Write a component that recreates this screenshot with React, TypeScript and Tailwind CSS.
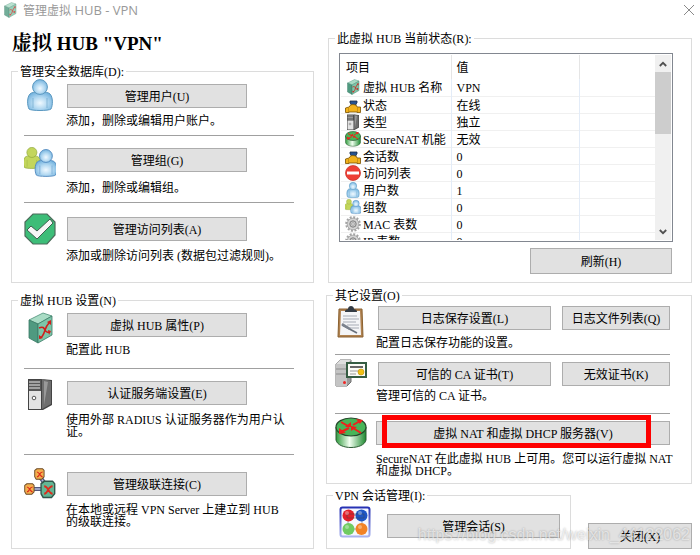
import type { ReactNode } from 'react';

type IconProps = { className?: string };

function HubIcon({ className = 'size-8' }: IconProps) {
  return (
    <svg viewBox="0 0 32 32" className={className} aria-hidden="true">
      <path d="M5 8 19 1l9 3-14 8z" fill="#a9dcc5" stroke="#4b8f78" strokeWidth=".8" />
      <path d="M5 8l9 4v19l-9-5z" fill="#4f9a80" stroke="#3b7a65" strokeWidth=".8" />
      <path d="M14 12l14-8v19l-14 8z" fill="#7cc6a9" stroke="#3b7a65" strokeWidth=".8" />
      <path d="M15 16c4-2 5 0 6 2s3 3 5 2M16 26c3-1 4-5 5-8s2-5 4-7" fill="none" stroke="#cf1f1c" strokeWidth="1.6" />
      <path d="M23 10l4-2v5zM24 18l3 1-2 4zM15 23v4l4-1z" fill="#cf1f1c" />
    </svg>
  );
}

function UserShape({ body, edge }: { body: string; edge: string }) {
  return (
    <g fill={body} stroke={edge} strokeWidth="1">
      <path d="M5 30c-2-4-2-12 1-15 2-3 18-3 20 0 3 3 3 11 1 15-2 2-20 2-22 0z" />
      <path d="M9 19v10M23 19v10" fill="none" opacity=".5" />
      <circle cx="16" cy="8" r="7.4" />
    </g>
  );
}

function BlueGradient({ id }: { id: string }) {
  return (
    <radialGradient id={id} cx=".5" cy=".6" r=".6">
      <stop offset="0" stopColor="#f0f9ff" />
      <stop offset=".5" stopColor="#b5daf2" />
      <stop offset="1" stopColor="#74b3de" />
    </radialGradient>
  );
}

function UserIcon({ className = 'size-8' }: IconProps) {
  return (
    <svg viewBox="0 0 32 32" className={className} aria-hidden="true">
      <defs><BlueGradient id="user-blue" /></defs>
      <UserShape body="url(#user-blue)" edge="#5a98c0" />
    </svg>
  );
}

function GroupIcon({ className = 'size-8' }: IconProps) {
  return (
    <svg viewBox="0 0 32 32" className={className} aria-hidden="true">
      <defs><BlueGradient id="group-blue" /></defs>
      <g transform="translate(-3 0) scale(.68)"><UserShape body="#c3d65c" edge="#8ea63a" /></g>
      <g transform="translate(8 2) scale(.87)"><UserShape body="url(#group-blue)" edge="#4c86bd" /></g>
    </svg>
  );
}

function AccessIcon({ className = 'size-8' }: IconProps) {
  return (
    <svg viewBox="0 0 32 32" className={className} aria-hidden="true">
      <path d="M9 1h14l8 8v13l-8 9H9l-8-8V9z" fill="#3dbd78" stroke="#4d6b5b" strokeWidth="1.2" />
      <path d="M3 17l4-4 6 5L26 6l3 4-16 16z" fill="#f6f6f6" stroke="#3f5f50" strokeWidth="1" />
    </svg>
  );
}

function ServerIcon({ className = 'size-8' }: IconProps) {
  return (
    <svg viewBox="0 0 32 32" className={className} aria-hidden="true">
      <path d="M4 1h13l11 1v25l-9 5H4z" fill="#444" />
      <path d="M18 1l9 2v23l-9 5z" fill="#6e6e6e" />
      <path d="M20 3l4 1-4 23z" fill="#999" />
      <path d="M5 2h12v11H5z" fill="#575757" />
      <path d="M5 4h11M5 7h11M5 10h11" stroke="#bbb" strokeWidth="1.3" />
      <path d="M5 13h12v18H5z" fill="#e3e3e3" />
      <circle cx="10" cy="20" r="1.8" fill="#fff" stroke="#555" />
    </svg>
  );
}

function SmallHub({ fill, edge }: { fill: string; edge: string }) {
  return (
    <g strokeLinejoin="round">
      <path d="M1 3l3-2h8l2 2v8l-3 3H3l-2-3z" fill={fill} stroke={edge} strokeWidth="1.3" />
      <path d="M4 11c4 0 3-6 8-6M4 5c4 0 4 6 8 6" fill="none" stroke="#dd2a1c" strokeWidth="1.5" />
    </g>
  );
}

function CascadeIcon({ className = 'size-8' }: IconProps) {
  return (
    <svg viewBox="0 0 32 32" className={className} aria-hidden="true">
      <path d="M16 10l6 8M9 22h9" stroke="#53587c" strokeWidth="4" />
      <path d="M16 10l6 8M9 22h9" stroke="#b5bada" strokeWidth="1.5" />
      <g transform="translate(10 1) scale(.72 .8)"><SmallHub fill="#f3b04e" edge="#6b4a25" /></g>
      <g transform="translate(0 16) scale(.72 .8)"><SmallHub fill="#f3b04e" edge="#6b4a25" /></g>
      <g transform="translate(16 13) scale(1.05 1.25)"><SmallHub fill="#63b695" edge="#31564b" /></g>
    </svg>
  );
}

function PlugIcon({ className = 'size-4' }: IconProps) {
  return (
    <svg viewBox="0 0 16 16" className={className} aria-hidden="true">
      <path d="M5 4h7v2l-1 1v3H6V7L5 6z" fill="#27538f" stroke="#1b2c48" strokeWidth=".8" />
      <path d="M5 9c0-2 7-2 7 1h3.500v5.500H12V15H4v.5H.5V11L4 10z" fill="#f2b21c" stroke="#7a5200" strokeWidth=".8" />
      <path d="M3.500 11v4M12.500 11v4" stroke="#c08a10" strokeWidth=".8" />
    </svg>
  );
}

function RouterIcon({ className = 'size-8' }: IconProps) {
  return (
    <svg viewBox="0 0 32 32" className={className} aria-hidden="true">
      <defs>
        <linearGradient id="router-side">
          <stop offset="0" stopColor="#2f9a3c" />
          <stop offset=".45" stopColor="#f1fff0" />
          <stop offset="1" stopColor="#1e8a30" />
        </linearGradient>
      </defs>
      <path d="M1 10v13c2 10 28 10 30 0V10z" fill="url(#router-side)" stroke="#2b5c33" />
      <ellipse cx="16" cy="10" rx="15" ry="9" fill="#48b558" stroke="#25492b" strokeWidth="1.2" />
      <path d="M6 5l7 4M25 4l-7 4M6 15l8-4M26 16l-8-5" stroke="#f0201c" strokeWidth="2" />
      <path d="M10 10h6V5zM21 2l7 1-3 4zM4 11v6l7-1zM16 9v5l6-4z" fill="#f0201c" />
    </svg>
  );
}

function DenyIcon({ className = 'size-4' }: IconProps) {
  return (
    <svg viewBox="0 0 16 16" className={className} aria-hidden="true">
      <circle cx="8" cy="8" r="7.500" fill="#ee3f35" stroke="#c42c25" strokeWidth=".7" />
      <path d="M2 6.500h12v3H2z" fill="#fff" />
    </svg>
  );
}

function GearIcon({ className = 'size-4' }: IconProps) {
  return (
    <svg viewBox="0 0 16 16" className={className} aria-hidden="true">
      <circle cx="8" cy="8" r="6.800" fill="none" stroke="#a3a3a3" strokeWidth="2" strokeDasharray="2 1.560" />
      <circle cx="8" cy="8" r="5.800" fill="#d3d3d3" stroke="#a0a0a0" strokeWidth=".8" />
      <circle cx="8" cy="8" r="3.200" fill="#c8c8c8" stroke="#808080" />
      <circle cx="8" cy="8" r="1.300" fill="#efefef" stroke="#888" strokeWidth=".6" />
    </svg>
  );
}

function LogIcon({ className = 'size-8' }: IconProps) {
  return (
    <svg viewBox="0 0 32 32" className={className} aria-hidden="true">
      <path d="M4 3h23l1 28H3z" fill="#b08250" stroke="#8a6130" />
      <path d="M6 5h19l1 24H5z" fill="#f4f5f7" />
      <path d="M10 6c0-3 2-2 3-3 0-4 6-4 6 0 1 1 3 0 3 3z" fill="#333b44" />
      <path d="M8 10h14M8 13h16M8 16h13M12 19h12M15 22h9" stroke="#c0c4cb" strokeWidth="1.4" />
      <path d="M7 19l15 8" stroke="#69707b" strokeWidth="1.600" />
      <path d="M7 18l8 5" stroke="#7c838e" strokeWidth="2.500" />
    </svg>
  );
}

function CertIcon({ className = 'size-8' }: IconProps) {
  return (
    <svg viewBox="0 0 32 32" className={className} aria-hidden="true">
      <path d="M1 5l4-4h11v22l-4 4H1z" fill="#9c9c9c" stroke="#707070" />
      <path d="M1 5h11v22H1z" fill="#c4c4c4" />
      <path d="M1 5l4-4h11l-4 4z" fill="#dedede" />
      <path d="M1 10h11M1 15h11" stroke="#8c8c8c" />
      <circle cx="9.500" cy="23.500" r="1.500" fill="#ee2727" />
      <path d="M12 4h19v14H12z" fill="#fbfbf6" stroke="#355c42" strokeWidth="2" />
      <path d="M15 8h13" stroke="#666" strokeWidth="2" />
      <path d="M15 12h8M15 15h6" stroke="#9a9a9a" />
      <circle cx="26" cy="13" r="3" fill="#f0c013" stroke="#bd8f00" strokeWidth=".6" />
    </svg>
  );
}

function SessionIcon({ className = 'size-8' }: IconProps) {
  return (
    <svg viewBox="0 0 32 32" className={className} aria-hidden="true">
      <defs>
        <linearGradient id="session-edge" x2="0" y2="1">
          <stop offset="0" stopColor="#2732b4" />
          <stop offset="1" stopColor="#a9b3ee" />
        </linearGradient>
      </defs>
      <rect x="1.500" y="1.500" width="29" height="29" rx="2" fill="#f5f7ff" stroke="url(#session-edge)" strokeWidth="2" />
      <path d="M9 9h14v14H9z" fill="none" stroke="#c9cdd8" strokeWidth="2" />
      <circle cx="9.500" cy="9.500" r="6" fill="#e3202b" />
      <circle cx="22.500" cy="9.500" r="6" fill="#1d55c4" />
      <circle cx="9.500" cy="23" r="6" fill="#6fcb62" />
      <circle cx="22.500" cy="23" r="6" fill="#f28326" />
      <path d="M8 8h17v4H8z" fill="none" stroke="#444" opacity=".45" />
      <g fill="#fff" opacity=".35">
        <circle cx="8" cy="7" r="2" />
        <circle cx="21" cy="7" r="2" />
        <circle cx="8" cy="21" r="2" />
        <circle cx="21" cy="21" r="2" />
      </g>
    </svg>
  );
}

// Latin runs get their own face, and never add to the height of a line
function Mixed({ text, latin = "font-['Liberation_Serif',serif]" }: { text: string; latin?: string }) {
  return text.split(/([\x20-\x7e]+)/).map((part, i) =>
    i % 2 ? (
      <span key={i} className={`leading-0 whitespace-pre-wrap ${latin}`}>{part}</span>
    ) : (
      part
    ),
  );
}

function Button({ label, className = '' }: { label: string; className?: string }) {
  return (
    <button type="button" className={`border border-[#adadad] bg-[#e1e1e1] text-center leading-4 hover:bg-[#e5f1fb] ${className}`}>
      <Mixed text={label} />
    </button>
  );
}

function Group({ title, className = '', bodyClass = '', children }: { title: string; className?: string; bodyClass?: string; children: ReactNode }) {
  return (
    <fieldset className={`min-w-0 border border-[#dcdcdc] ${className}`}>
      <legend className="ml-1.5 px-0.5 leading-4"><Mixed text={title} /></legend>
      <div className={bodyClass}>{children}</div>
    </fieldset>
  );
}

type ItemProps = {
  icon: ReactNode;
  label: string;
  note: string;
  className?: string;
  bodyClass?: string;
  noteClass?: string;
};

function Item({ icon, label, note, className = '', bodyClass = '', noteClass = 'mt-1.5' }: ItemProps) {
  return (
    <div className={`flex items-start gap-2.5 ${className}`}>
      {icon}
      <div className={`min-w-0 flex-1 ${bodyClass}`}>
        <Button label={label} className="ml-px block h-6 w-45" />
        <p className={`pr-1 ${noteClass}`}><Mixed text={note} /></p>
      </div>
    </div>
  );
}

const Line = ({ className = '' }: { className?: string }) => <hr className={`border-[#a0a0a0] ${className}`} />;

const rows = [
  { icon: <HubIcon className="size-4" />, name: '虚拟 HUB 名称', value: 'VPN' },
  { icon: <PlugIcon />, name: '状态', value: '在线' },
  { icon: <ServerIcon className="size-4" />, name: '类型', value: '独立' },
  { icon: <RouterIcon className="size-4" />, name: 'SecureNAT 机能', value: '无效' },
  { icon: <PlugIcon />, name: '会话数', value: '0' },
  { icon: <DenyIcon />, name: '访问列表', value: '0' },
  { icon: <UserIcon className="size-4" />, name: '用户数', value: '1' },
  { icon: <GroupIcon className="size-4" />, name: '组数', value: '0' },
  { icon: <GearIcon />, name: 'MAC 表数', value: '0' },
  { icon: <GearIcon />, name: 'IP 表数', value: '0' },
];

function StatusList() {
  return (
    <div className="mt-[7px] mr-[18px] ml-2.5 flex h-[189px] overflow-hidden border border-[#828790] p-px">
      <div className="min-w-0 flex-1 overflow-hidden">
        <table className="w-full table-fixed border-collapse text-left">
          <thead>
            <tr className="h-6">
              <th className="w-[110px] border-r border-[#e5e5e5] pl-[5px] font-normal">项目</th>
              <th className="w-32 border-r border-[#e5e5e5] pl-[5px] font-normal">值</th>
              <th />
            </tr>
          </thead>
          <tbody>
            {rows.map((row) => (
              <tr key={row.name} className="h-[17px] border-b border-[#f0f0f0]">
                <td className="border-r border-r-[#e3ecf8] p-0 pl-1">
                  <div className="flex h-4 items-center gap-0.5 whitespace-nowrap">
                    <span className="shrink-0">{row.icon}</span>
                    <span><Mixed text={row.name} /></span>
                  </div>
                </td>
                <td className="border-r border-r-[#e3ecf8] p-0 pl-[5px]"><Mixed text={row.value} /></td>
                <td className="p-0" />
              </tr>
            ))}
          </tbody>
        </table>
      </div>
      <div className="flex w-4 flex-col items-center bg-[#f0f0f0]">
        <button type="button" aria-label="向上滚动" className="flex h-[17px] w-full items-center justify-center">
          <svg viewBox="0 0 8 6" className="h-1.5 w-2"><path d="M.8 5L4 1.800 7.200 5" fill="none" stroke="#505050" strokeWidth="1.800" /></svg>
        </button>
        <div className="h-[62px] w-full bg-[#cdcdcd]" />
        <button type="button" aria-label="向下滚动" className="mt-auto flex h-[17px] w-full items-center justify-center">
          <svg viewBox="0 0 8 6" className="h-1.5 w-2"><path d="M.8 1L4 4.200 7.200 1" fill="none" stroke="#505050" strokeWidth="1.800" /></svg>
        </button>
      </div>
    </div>
  );
}

export default function App() {
  return (
    <div className="relative overflow-hidden bg-white pb-1.5 font-['Noto_Sans_CJK_SC',sans-serif] text-[12px] leading-3 text-black">
      <header className="flex h-5 items-center pr-1.5 pl-0.5">
        <HubIcon className="size-4 opacity-80" />
        <span className="ml-[5px] flex-1 leading-4 text-[#999]">
          <Mixed text="管理虚拟 HUB - VPN" latin="font-['Open_Sans',sans-serif] text-[13px]" />
        </span>
        <button type="button" aria-label="关闭窗口">
          <svg viewBox="0 0 10 10" className="size-2.5"><path d="M0 0l10 10M10 0L0 10" stroke="#8a8a8a" /></svg>
        </button>
      </header>

      <main className="grid grid-cols-[303fr_366fr] gap-x-3 pt-2.5 pr-2 pl-[11px]">
        <div>
          <h1 className="pl-px font-['Noto_Serif_CJK_SC','Noto_Sans_CJK_SC',sans-serif] text-[20px] leading-6 font-bold">
            <Mixed text={'虚拟 HUB "VPN"'} latin="font-['Liberation_Serif',serif] text-[19px]" />
          </h1>

          <Group title="管理安全数据库(D):" className="mt-[9px]" bodyClass="pr-[19px] pb-[21px] pl-3">
            <Item icon={<UserIcon />} label="管理用户(U)" note="添加，删除或编辑用户账户。" bodyClass="pt-[5px]" />
            <Line className="mt-[9px]" />
            <Item icon={<GroupIcon />} label="管理组(G)" note="添加，删除或编辑组。" className="mt-[11px]" bodyClass="pt-px" noteClass="mt-[9px]" />
            <Line className="mt-[9px]" />
            <Item icon={<AccessIcon />} label="管理访问列表(A)" note="添加或删除访问列表 (数据包过滤规则)。" className="mt-2.5" bodyClass="pt-1" noteClass="mt-2" />
          </Group>

          <Group title="虚拟 HUB 设置(N)" className="mt-[9px]" bodyClass="pr-[19px] pb-[21px] pl-3">
            <Item icon={<HubIcon />} label="虚拟 HUB 属性(P)" note="配置此 HUB" className="mt-1" bodyClass="pt-px" />
            <Line className="mt-[13px]" />
            <Item icon={<ServerIcon />} label="认证服务端设置(E)" note="使用外部 RADIUS 认证服务器作为用户认证。" className="mt-[9px]" bodyClass="pt-[3px]" noteClass="mt-2" />
            <Line className="mt-[17px]" />
            <Item icon={<CascadeIcon />} label="管理级联连接(C)" note="在本地或远程 VPN Server 上建立到 HUB 的级联连接。" className="mt-3" bodyClass="pt-[5px]" noteClass="mt-[7px]" />
          </Group>
        </div>

        <div>
          <Group title="此虚拟 HUB 当前状态(R):" className="ml-0.5" bodyClass="pb-2">
            <StatusList />
            <div className="mt-1.5 mr-[19px] flex justify-end">
              <Button label="刷新(H)" className="h-[26px] w-[142px]" />
            </div>
          </Group>

          <Group title="其它设置(O)" className="mt-1" bodyClass="pr-[21px] pb-[7px] pl-2">
            <div className="mt-[3px] flex items-start gap-[9px]">
              <LogIcon />
              <div className="min-w-0 flex-1">
                <div className="flex gap-[11px] pl-0.5">
                  <Button label="日志保存设置(L)" className="h-6 flex-1" />
                  <Button label="日志文件列表(Q)" className="h-6 w-27" />
                </div>
                <p className="mt-1.5"><Mixed text="配置日志保存功能的设置。" /></p>
              </div>
            </div>
            <Line className="mt-1.5" />
            <div className="mt-1 flex items-start gap-[9px]">
              <CertIcon />
              <div className="min-w-0 flex-1 pt-[3px]">
                <div className="flex gap-[11px] pl-0.5">
                  <Button label="可信的 CA 证书(T)" className="h-6 flex-1" />
                  <Button label="无效证书(K)" className="h-6 w-27" />
                </div>
                <p className="mt-[3px]"><Mixed text="管理可信的 CA 证书。" /></p>
              </div>
            </div>
            <Line className="mt-3" />
            <div className="mt-[3px] flex items-start gap-[9px]">
              <RouterIcon />
              <div className="min-w-0 flex-1 pt-1">
                <div className="relative">
                  <Button label="虚拟 NAT 和虚拟 DHCP 服务器(V)" className="block h-6 w-full" />
                  <div className="pointer-events-none absolute -top-1.5 right-[19px] -bottom-[3px] left-1.5 border-5 border-[#fe0000]" />
                </div>
                <p className="-mr-2 mt-[7px]"><Mixed text="SecureNAT 在此虚拟 HUB 上可用。您可以运行虚拟 NAT 和虚拟 DHCP。" /></p>
              </div>
            </div>
          </Group>

          <div className="mt-[3px] flex items-end gap-[17px]">
            <Group title="VPN 会话管理(I):" className="flex-1" bodyClass="pr-2.5 pb-2.5 pl-3">
              <div className="mt-[3px] flex items-start gap-4">
                <SessionIcon />
                <Button label="管理会话(S)" className="mt-2 h-6 flex-1" />
              </div>
            </Group>
            <Button label="关闭(X)" className="h-[26px] w-[104px]" />
          </div>
        </div>
      </main>

      <div className="pointer-events-none absolute right-2.5 bottom-2.5 font-['Liberation_Sans',sans-serif] text-[16px] leading-5 text-white/60 [text-shadow:0_0_2px_#00000050]">
        https://blog.csdn.net/weixin_44122062
      </div>
    </div>
  );
}
